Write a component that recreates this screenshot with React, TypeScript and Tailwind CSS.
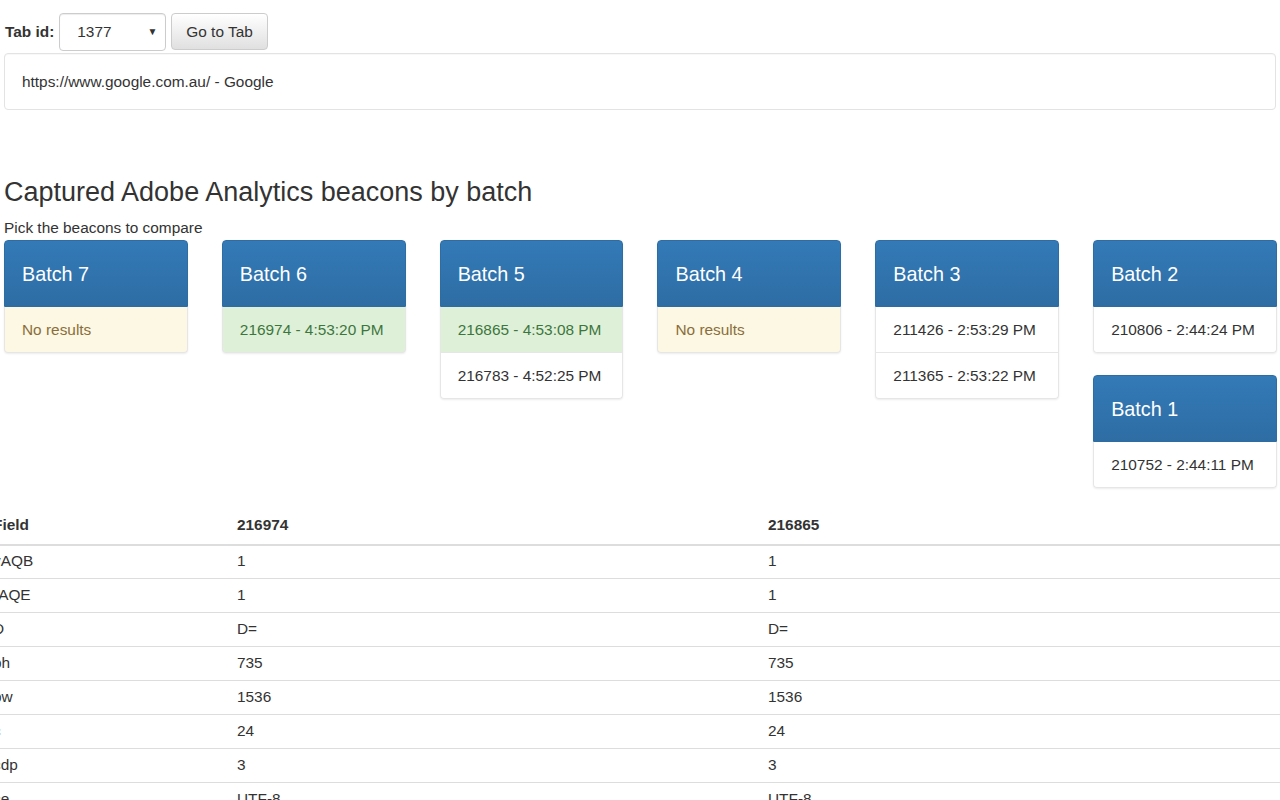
import React from 'react';

type Beacon = { id: string; time: string; state?: 'success' | 'warning' };

const batches: { name: string; items: Beacon[] }[][] = [
  [{ name: 'Batch 7', items: [{ id: '', time: '', state: 'warning' }] }],
  [{ name: 'Batch 6', items: [{ id: '216974', time: '4:53:20 PM', state: 'success' }] }],
  [
    {
      name: 'Batch 5',
      items: [
        { id: '216865', time: '4:53:08 PM', state: 'success' },
        { id: '216783', time: '4:52:25 PM' },
      ],
    },
  ],
  [{ name: 'Batch 4', items: [{ id: '', time: '', state: 'warning' }] }],
  [
    {
      name: 'Batch 3',
      items: [
        { id: '211426', time: '2:53:29 PM' },
        { id: '211365', time: '2:53:22 PM' },
      ],
    },
  ],
  [
    { name: 'Batch 2', items: [{ id: '210806', time: '2:44:24 PM' }] },
    { name: 'Batch 1', items: [{ id: '210752', time: '2:44:11 PM' }] },
  ],
];

const rows: [string, string, string][] = [
  ['vAQB', '1', '1'],
  ['rAQE', '1', '1'],
  ['D', 'D=', 'D='],
  ['bh', '735', '735'],
  ['bw', '1536', '1536'],
  ['c', '24', '24'],
  ['cdp', '3', '3'],
  ['ce', 'UTF-8', 'UTF-8'],
  ['cl', 'Lax', 'Lax'],
  ['g', 'https://www.google.com.au/', 'https://www.google.com.au/'],
];

function Panel({ name, items }: { name: string; items: Beacon[] }) {
  return (
    <div className="mb-[22px] rounded-[4px] shadow-[0_1px_2px_rgba(0,0,0,0.08)]">
      <div className="flex h-[67px] items-center rounded-t-[4px] border border-[#2e6da4] bg-gradient-to-b from-[#337ab7] to-[#2e6da4] px-[17px] text-[19.8px] text-white">
        {name}
      </div>
      {items.map((b, i) => {
        const tone =
          b.state === 'success'
            ? 'bg-[#dff0d8] text-[#3c763d]'
            : b.state === 'warning'
              ? 'bg-[#fcf8e3] text-[#8a6d3b]'
              : 'bg-white text-[#333]';
        return (
          <div
            key={i}
            className={`flex h-[46px] items-center border-x border-b border-[#e6e6e6] px-[17px] last:rounded-b-[4px] ${tone}`}
          >
            {b.id ? `${b.id} - ${b.time}` : 'No results'}
          </div>
        );
      })}
    </div>
  );
}

export default function App() {
  return (
    <div
      className="h-screen overflow-hidden bg-white px-[4px] pt-[13px] text-[15.4px] leading-[22px] text-[#333]"
      style={{ fontFamily: '"Liberation Sans", Arial, Helvetica, sans-serif' }}
    >
      <div className="flex items-center">
        <span className="whitespace-nowrap pl-[1px] pr-[5px] font-bold">Tab id:</span>
        <div className="flex h-[38px] w-[107px] items-center justify-between rounded-[4px] border border-[#ccc] bg-white pl-[17px] pr-[8px] shadow-[inset_0_1px_1px_rgba(0,0,0,0.075)]">
          <span>1377</span>
          <span className="text-[10px]">▼</span>
        </div>
        <button className="mb-[1px] ml-[5px] h-[37px] whitespace-nowrap rounded-[4px] border border-[#ccc] bg-gradient-to-b from-white to-[#e0e0e0] px-[14px] text-[#333]">
          Go to Tab
        </button>
      </div>

      <div className="mt-[2px] flex h-[57px] items-center rounded-[4px] border border-[#e3e3e3] bg-white px-[17px] shadow-[inset_0_1px_1px_rgba(0,0,0,0.03)]">
        https://www.google.com.au/ - Google
      </div>

      <h2 className="mt-[68px] text-[27px] leading-[29px] font-normal">
        Captured Adobe Analytics beacons by batch
      </h2>
      <p className="mt-[10px]">Pick the beacons to compare</p>

      <div className="mt-[1px] grid w-[1273px] grid-cols-6 gap-x-[34px]">
        {batches.map((col, i) => (
          <div key={i}>
            {col.map((p) => (
              <Panel key={p.name} name={p.name} items={p.items} />
            ))}
          </div>
        ))}
      </div>

      <table className="-ml-[19px] w-[1310px] table-fixed border-collapse">
        <colgroup>
          <col className="w-[244px]" />
          <col className="w-[531px]" />
          <col className="w-[535px]" />
        </colgroup>
        <thead>
          <tr className="border-b-2 border-[#ddd]">
            <th className="pl-[8px] pt-[4px] pb-[8px] text-left font-bold">Field</th>
            <th className="pl-[8px] pt-[4px] pb-[8px] text-left font-bold">216974</th>
            <th className="pl-[8px] pt-[4px] pb-[8px] text-left font-bold">216865</th>
          </tr>
        </thead>
        <tbody>
          {rows.map(([f, a, b], i) => (
            <tr key={f} className={i === 0 ? '' : 'border-t border-[#ddd]'}>
              <td className={`pl-[8px] pb-[6px] ${i === 0 ? 'pt-[4px]' : 'pt-[5px]'}`}>{f}</td>
              <td className={`pl-[8px] pb-[6px] ${i === 0 ? 'pt-[4px]' : 'pt-[5px]'}`}>{a}</td>
              <td className={`pl-[8px] pb-[6px] ${i === 0 ? 'pt-[4px]' : 'pt-[5px]'}`}>{b}</td>
            </tr>
          ))}
        </tbody>
      </table>
    </div>
  );
}
